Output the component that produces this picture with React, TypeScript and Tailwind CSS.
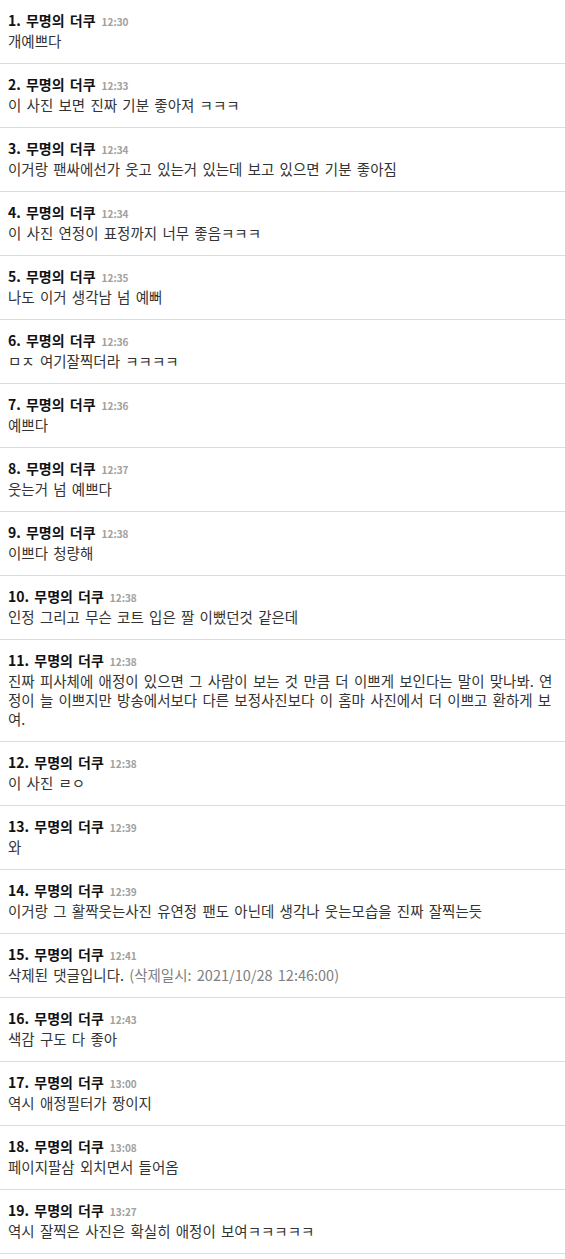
import React from 'react';

type Comment = {
  time: string;
  text: string;
  deletedAt?: string;
};

const comments: Comment[] = [
  { time: '12:30', text: '개예쁘다' },
  { time: '12:33', text: '이 사진 보면 진짜 기분 좋아져 ㅋㅋㅋ' },
  { time: '12:34', text: '이거랑 팬싸에선가 웃고 있는거 있는데 보고 있으면 기분 좋아짐' },
  { time: '12:34', text: '이 사진 연정이 표정까지 너무 좋음ㅋㅋㅋ' },
  { time: '12:35', text: '나도 이거 생각남 넘 예뻐' },
  { time: '12:36', text: 'ㅁㅈ 여기잘찍더라 ㅋㅋㅋㅋ' },
  { time: '12:36', text: '예쁘다' },
  { time: '12:37', text: '웃는거 넘 예쁘다' },
  { time: '12:38', text: '이쁘다 청량해' },
  { time: '12:38', text: '인정 그리고 무슨 코트 입은 짤 이뻤던것 같은데' },
  {
    time: '12:38',
    text: '진짜 피사체에 애정이 있으면 그 사람이 보는 것 만큼 더 이쁘게 보인다는 말이 맞나봐. 연정이 늘 이쁘지만 방송에서보다 다른 보정사진보다 이 홈마 사진에서 더 이쁘고 환하게 보여.',
  },
  { time: '12:38', text: '이 사진 ㄹㅇ' },
  { time: '12:39', text: '와' },
  { time: '12:39', text: '이거랑 그 활짝웃는사진 유연정 팬도 아닌데 생각나 웃는모습을 진짜 잘찍는듯' },
  { time: '12:41', text: '삭제된 댓글입니다.', deletedAt: '(삭제일시: 2021/10/28 12:46:00)' },
  { time: '12:43', text: '색감 구도 다 좋아' },
  { time: '13:00', text: '역시 애정필터가 짱이지' },
  { time: '13:08', text: '페이지팔삼 외치면서 들어옴' },
  { time: '13:27', text: '역시 잘찍은 사진은 확실히 애정이 보여ㅋㅋㅋㅋㅋ' },
];

const CommentRow = ({ c, n }: { c: Comment; n: number }) => (
  <li className="border-b border-[#dcdcdc] px-2 pt-[10px] pb-[13px]">
    <div className="flex items-baseline h-[21px]">
      <span className="text-[14px] font-bold text-[#111] [word-spacing:2px]">{n}. 무명의 더쿠</span>
      <span className="ml-[6px] text-[10px] font-bold text-[#a0a0a0]">{c.time}</span>
    </div>
    <p className="text-[14.5px] leading-[19px] text-[#333] break-all [word-spacing:2px]">
      {c.text}
      {c.deletedAt && <span className="text-[#808080]"> {c.deletedAt}</span>}
    </p>
  </li>
);

export default function App() {
  return (
    <div
      className="bg-white w-[565px]"
      style={{ fontFamily: '"Noto Sans CJK KR", "Noto Sans", sans-serif' }}
    >
      <ul>
        {comments.map((c, i) => (
          <CommentRow key={i} c={c} n={i + 1} />
        ))}
      </ul>
    </div>
  );
}
